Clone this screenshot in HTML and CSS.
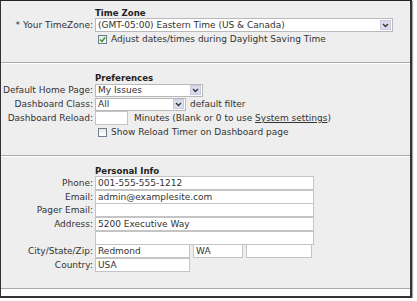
FILE: index.html
```html
<!DOCTYPE html>
<html lang="en">
<head>
    <meta charset="UTF-8">
    <title>User Settings</title>
    <link rel="stylesheet" href="styles.css">
</head>
<body>

    <div class="frame">

        <!-- Time Zone -->
        <section id="timezone" class="group">
            <div class="row head"><span class="label"></span><h2>Time Zone</h2></div>
            <div class="row">
                <span class="label">* Your TimeZone:</span>
                <div class="select tz-select">
                    <span>(GMT-05:00) Eastern Time (US &amp; Canada)</span>
                    <i class="arrow"><svg width="7" height="5" viewBox="0 0 7 5"><path d="M1 1 L3.5 3.5 L6 1" fill="none" stroke="#333" stroke-width="1.4"/></svg></i>
                </div>
            </div>
            <div class="row">
                <span class="label"></span>
                <label class="check">
                    <span class="box"><svg width="7" height="7" viewBox="0 0 7 7"><path d="M1 3.5 L3 5.5 L6 1.5" fill="none" stroke="#3c9a32" stroke-width="1.5"/></svg></span>
                    Adjust dates/times during Daylight Saving Time
                </label>
            </div>
        </section>

        <!-- Preferences -->
        <section id="preferences" class="group">
            <div class="row head"><span class="label"></span><h2>Preferences</h2></div>
            <div class="row">
                <span class="label">Default Home Page:</span>
                <div class="select home-select">
                    <span>My Issues</span>
                    <i class="arrow"><svg width="7" height="5" viewBox="0 0 7 5"><path d="M1 1 L3.5 3.5 L6 1" fill="none" stroke="#333" stroke-width="1.4"/></svg></i>
                </div>
            </div>
            <div class="row">
                <span class="label">Dashboard Class:</span>
                <div class="select class-select">
                    <span>All</span>
                    <i class="arrow"><svg width="7" height="5" viewBox="0 0 7 5"><path d="M1 1 L3.5 3.5 L6 1" fill="none" stroke="#333" stroke-width="1.4"/></svg></i>
                </div>
                <span class="after">default filter</span>
            </div>
            <div class="row">
                <span class="label">Dashboard Reload:</span>
                <input class="input reload" type="text" value="">
                <span class="after wide">Minutes (Blank or 0 to use <a href="#">System settings</a>)</span>
            </div>
            <div class="row">
                <span class="label"></span>
                <label class="check">
                    <span class="box"></span>
                    Show Reload Timer on Dashboard page
                </label>
            </div>
        </section>

        <!-- Personal Info -->
        <section id="personal" class="group">
            <div class="row head"><span class="label"></span><h2>Personal Info</h2></div>
            <div class="row">
                <span class="label">Phone:</span>
                <input class="input long" type="text" value="001-555-555-1212">
            </div>
            <div class="row">
                <span class="label">Email:</span>
                <input class="input long" type="text" value="admin@examplesite.com">
            </div>
            <div class="row">
                <span class="label">Pager Email:</span>
                <input class="input long" type="text" value="">
            </div>
            <div class="row">
                <span class="label">Address:</span>
                <input class="input long" type="text" value="5200 Executive Way">
            </div>
            <div class="row">
                <span class="label"></span>
                <input class="input long" type="text" value="">
            </div>
            <div class="row">
                <span class="label">City/State/Zip:</span>
                <input class="input city" type="text" value="Redmond">
                <input class="input state" type="text" value="WA">
                <input class="input zip" type="text" value="">
            </div>
            <div class="row">
                <span class="label">Country:</span>
                <input class="input city" type="text" value="USA">
            </div>
        </section>

    </div>

</body>
</html>
```

FILE: styles.css
```css
/* Base */
* {
    margin: 0;
    padding: 0;
    box-sizing: border-box;
}

body {
    background-color: #fff;
    font-family: "DejaVu Sans", Verdana, sans-serif;
    font-size: 9px;
    color: #333;
}

a {
    color: inherit;
    text-decoration: underline;
}

/* Window frame */
.frame {
    width: 412px;
    height: 298px;
    background-color: #fff;
    border-top: 1px solid #222;
    border-left: 1px solid #333;
    border-right: 2px solid #333;
    border-bottom: 2px solid #333;
    box-shadow: 1px 1px 1px #aaa;
}

/* Groups */
.group {
    background-color: #eee;
    border-bottom: 1px solid #a9a9a9;
}

.group + .group {
    border-top: 1px solid #fff;
}

#timezone {
    height: 62px;
    padding-top: 6px;
}

#preferences {
    height: 93px;
    padding-top: 8px;
}

#personal {
    height: 133px;
    padding-top: 8px;
}

h2 {
    font-size: 8.6px;
    font-weight: bold;
    color: #222;
}

/* Rows */
.row {
    display: flex;
    align-items: center;
    height: 14px;
    white-space: nowrap;
}

.row.head {
    height: 11px;
}

#personal .row {
    height: 13.7px;
}

#personal .row.head {
    height: 11px;
}

.label {
    flex: none;
    width: 92px;
    margin-right: 2px;
    display: flex;
    justify-content: flex-end;
}

.after {
    margin-left: 4px;
}

.after.wide {
    margin-left: 6px;
}

/* Fields */
.input {
    height: 14px;
    border: 1px solid #c4c4c4;
    background-color: #fff;
    padding: 0 2px;
    font-family: inherit;
    font-size: 9px;
    color: #333;
    outline: none;
}

.input.long { width: 219px; }
.input.city { width: 95px; }
.input.state { width: 50px; margin-left: 3px; }
.input.zip { width: 66px; margin-left: 3px; }
.input.reload { width: 33px; }

.select {
    display: flex;
    align-items: center;
    justify-content: space-between;
    height: 14px;
    border: 1px solid #b9b9b9;
    background-color: #fff;
    padding-left: 2px;
}

.tz-select { width: 298px; }
.home-select { width: 108px; height: 13px; }
.class-select { width: 91px; height: 13px; }

.arrow {
    display: flex;
    align-items: center;
    justify-content: center;
    width: 11px;
    height: 10px;
    margin-right: 1px;
    background-color: #dcdcef;
    border: 1px solid #c9c9e0;
}

/* Checkboxes */
.check {
    display: flex;
    align-items: center;
    gap: 4px;
    margin-left: 3px;
}

.box {
    display: flex;
    align-items: center;
    justify-content: center;
    width: 9px;
    height: 9px;
    border: 1px solid #6f7f92;
    background: linear-gradient(#e6e6e6, #fff);
}
```
